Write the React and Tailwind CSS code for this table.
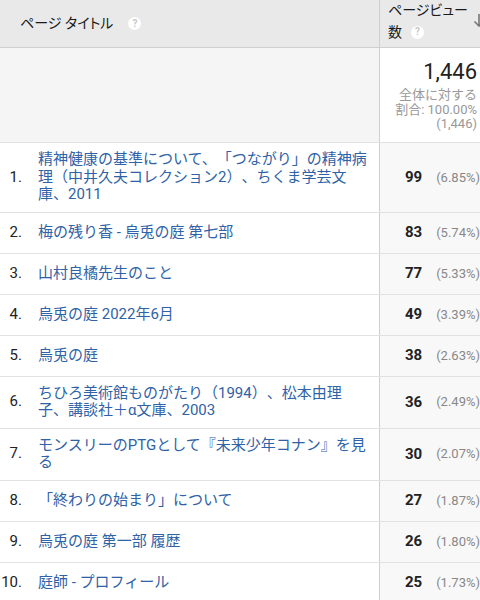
import React from "react";

const rows = [
  { title: "精神健康の基準について、「つながり」の精神病理（中井久夫コレクション2）、ちくま学芸文庫、2011", views: 99, pct: "(6.85%)" },
  { title: "梅の残り香 - 烏兎の庭 第七部", views: 83, pct: "(5.74%)" },
  { title: "山村良橘先生のこと", views: 77, pct: "(5.33%)" },
  { title: "烏兎の庭 2022年6月", views: 49, pct: "(3.39%)" },
  { title: "烏兎の庭", views: 38, pct: "(2.63%)" },
  { title: "ちひろ美術館ものがたり（1994）、松本由理子、講談社＋α文庫、2003", views: 36, pct: "(2.49%)" },
  { title: "モンスリーのPTGとして『未来少年コナン』を見る", views: 30, pct: "(2.07%)" },
  { title: "「終わりの始まり」について", views: 27, pct: "(1.87%)" },
  { title: "烏兎の庭 第一部 履歴", views: 26, pct: "(1.80%)" },
  { title: "庭師 - プロフィール", views: 25, pct: "(1.73%)" },
];

const Help = () => (
  <span className="inline-flex w-[13px] h-[13px] rounded-full bg-white text-[#c8c8c8] text-[10px] font-bold leading-none items-center justify-center align-middle">
    ?
  </span>
);

const App = () => {
  return (
    <div
      className="w-[480px] h-[600px] overflow-hidden bg-white text-[#222] [text-spacing-trim:space-all]"
      style={{ fontFamily: "Roboto, 'Noto Sans CJK JP', sans-serif" }}
    >
      {/* header */}
      <div className="flex h-[48px] bg-[#e9e9e9] border-b border-[#cfcfcf] [font-feature-settings:'palt']">
        <div className="w-[380px] shrink-0 border-r border-[#cfcfcf] flex items-center pl-[20px] gap-[15px] text-[14px] text-[#1a1a1a]">
          <span>ページ タイトル</span>
          <Help />
        </div>
        <div className="flex-1 relative pl-[8px] text-[14px] leading-[22px] text-[#1a1a1a] -mt-[1px]">
          <div>ページビュー</div>
          <div className="flex items-center gap-[9px]">
            <span>数</span>
            <Help />
          </div>
          <svg
            className="absolute right-[-5px] top-[14px]"
            width="12"
            height="14"
            viewBox="0 0 12 14"
            fill="none"
            stroke="#777"
            strokeWidth="1.6"
          >
            <path d="M6 1v12M1.5 8.5 6 13l4.5-4.5" />
          </svg>
        </div>
      </div>

      {/* summary */}
      <div className="flex h-[95px] border-b border-[#e2e2e2]">
        <div className="w-[380px] shrink-0 bg-[#f5f5f5] border-r border-[#cfcfcf]" />
        <div className="flex-1 bg-white flex flex-col items-end pr-[3px] pt-[11px]">
          <div className="text-[22px] leading-[26px] text-[#222]">1,446</div>
          <div className="mt-[3px] text-[13px] leading-[14.5px] text-[#999] text-right">
            <div>全体に対する</div>
            <div>割合: 100.00%</div>
            <div>(1,446)</div>
          </div>
        </div>
      </div>

      {/* rows */}
      {rows.map((row, index) => (
        <div key={index} className="flex border-b border-[#e2e2e2]">
          <div className="w-[380px] shrink-0 border-r border-[#cfcfcf] flex items-center min-h-[40px] py-[8px] text-[15px] leading-[17.5px]">
            <span className="w-[22px] shrink-0 text-right text-[#222]">{index + 1}.</span>
            <span className="ml-[16px] pr-[8px] text-[#2f62a6]">{row.title}</span>
          </div>
          <div className="flex-1 bg-[#f8f8f8] flex items-center justify-end">
            <span className="text-[15px] font-bold text-[#222]">{row.views}</span>
            <span className="ml-[14px] text-[13px] text-[#888]">{row.pct}</span>
          </div>
        </div>
      ))}
    </div>
  );
};

export default App;
